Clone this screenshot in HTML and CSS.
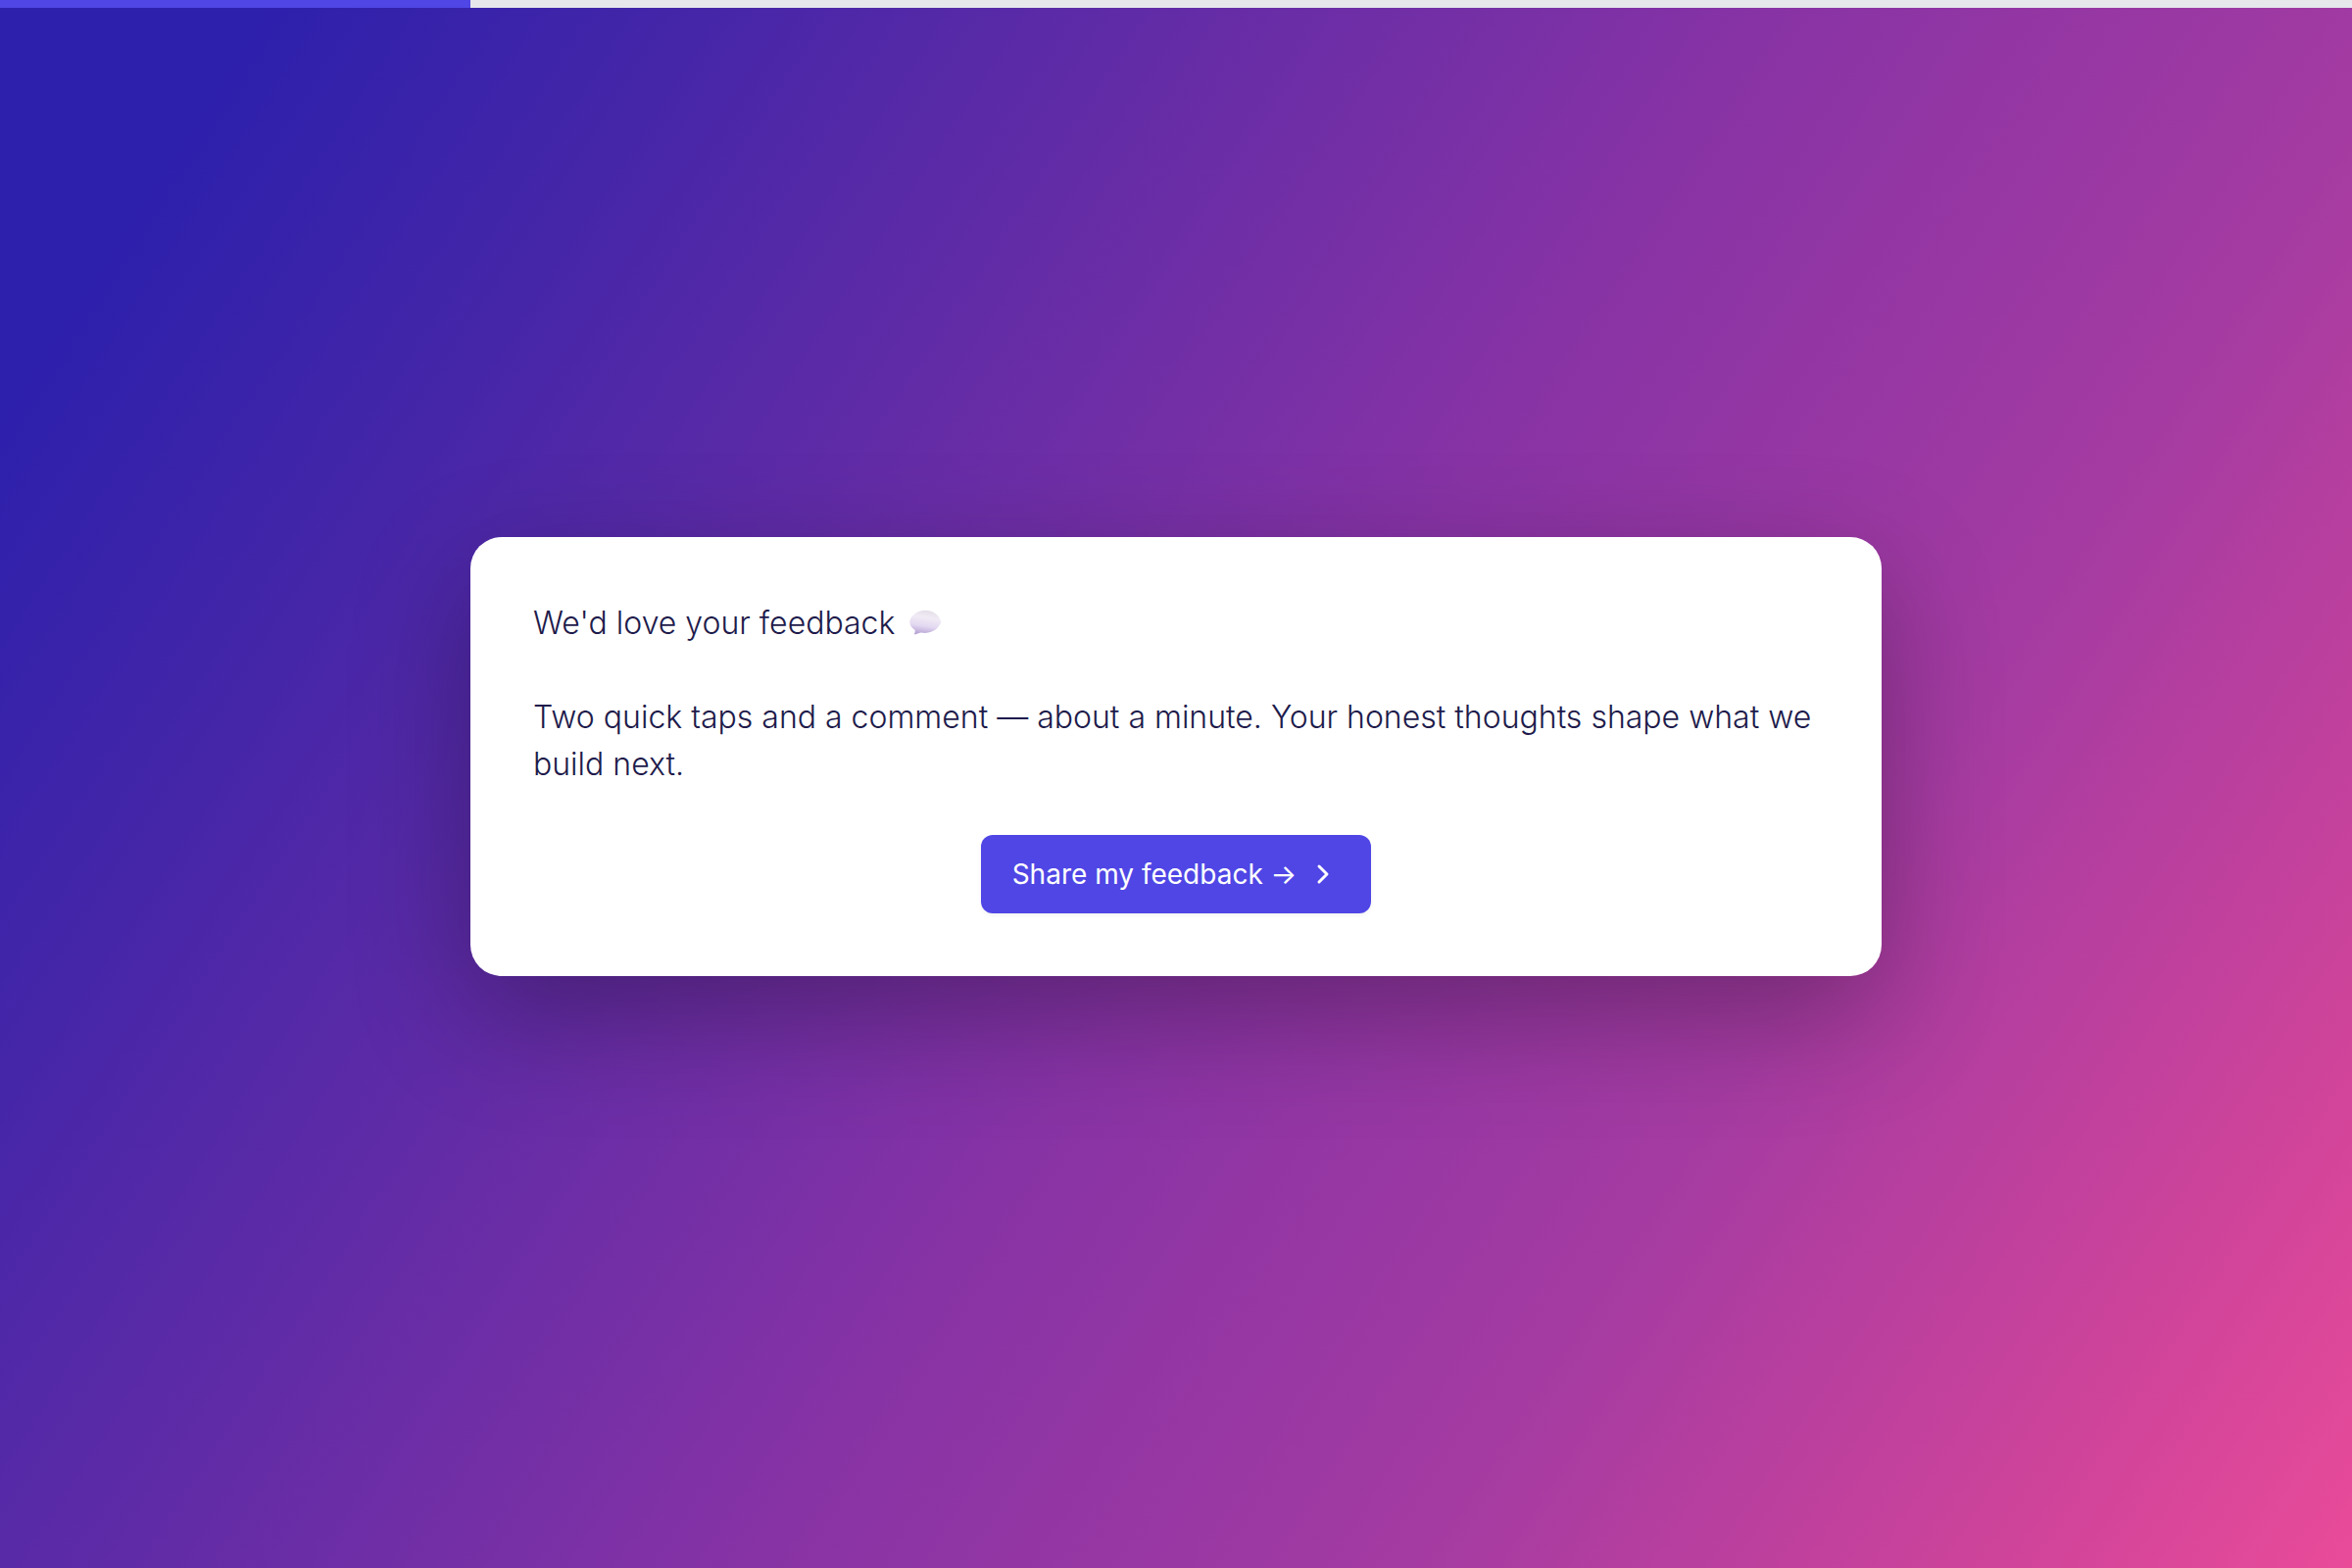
FILE: index.html
```html
<!DOCTYPE html>
<html lang="en">
    <head>
        <meta charset="utf-8">
        <title>Feedback</title>
        <link rel="stylesheet" href="styles.css">
    </head>
    <body>
        <div class="progress">
            <div class="progress-fill" style="width: 20%"></div>
        </div>
        <main class="page">
            <div class="card">
                <p class="text">We'd love your feedback
                    <svg class="bubble" viewBox="0 0 32 32" aria-hidden="true">
                        <defs>
                            <linearGradient id="bubbleFill" x1="0.6" y1="0" x2="0.4" y2="1">
                                <stop offset="0" stop-color="#e2dde6"/>
                                <stop offset="0.3" stop-color="#f1ebf5"/>
                                <stop offset="0.65" stop-color="#e3d9f1"/>
                                <stop offset="1" stop-color="#b5a2d4"/>
                            </linearGradient>
                        </defs>
                        <path fill="url(#bubbleFill)" d="M16 5C9 5 3 10 2 15c0 3.500 1.800 6 4.500 7.600.8 1.500.3 2.500-.2 3.600-.2.8.4 1 1 .7l4.700-1.600c1.400.3 2.700.4 4 .4C24 25.200 29 20.500 30.500 15.500 28.500 9.500 24 5 16 5z"/>
                    </svg>
                </p>
                <p class="text">Two quick taps and a comment — about a minute. Your honest thoughts shape what we build next.</p>
                <button class="button" type="button">
                    <span>Share my feedback →</span>
                    <svg class="chevron" viewBox="0 0 32 32" aria-hidden="true">
                        <path d="M11 8l8 8-8 8"/>
                    </svg>
                </button>
            </div>
        </main>
    </body>
</html>
```

FILE: styles.css
```css
* {
    box-sizing: border-box;
}

body {
    margin: 0;
    min-height: 100vh;
    display: flex;
    flex-direction: column;
    font-family: "Inter", sans-serif;
    background: linear-gradient(123deg, #2d20ac 8%, #4526a8 21%, #8833a5 53%, #a43ba2 72%, #d0449a 90%, #e94b99 100%);
}

.progress {
    height: 8px;
    background: #e5e7eb;
}

.progress-fill {
    height: 100%;
    background: #4f46e5;
}

.page {
    flex: 1;
    display: flex;
    align-items: center;
    justify-content: center;
    padding-bottom: 64px;
}

.card {
    width: 60%;
    padding: 64px;
    display: flex;
    flex-direction: column;
    background: #fff;
    border-radius: 32px;
    box-shadow: 0 40px 120px rgba(0, 0, 0, 0.3);
}

.text {
    margin: 0 0 48px;
    font-size: 32px;
    font-weight: 300;
    line-height: 48px;
    color: #1e1b4b;
}

.bubble {
    width: 36px;
    height: 36px;
    margin-left: 4px;
    vertical-align: -6px;
}

.button {
    align-self: center;
    height: 80px;
    padding: 0 32px;
    display: flex;
    align-items: center;
    gap: 12px;
    border: none;
    border-radius: 12px;
    background: #4f46e5;
    color: #fff;
    font-family: inherit;
    font-size: 28px;
    box-shadow: 0 2px 4px rgba(0, 0, 0, 0.05);
}

.chevron {
    width: 32px;
    height: 32px;
    fill: none;
    stroke: #fff;
    stroke-width: 3;
    stroke-linecap: round;
    stroke-linejoin: round;
}
```
